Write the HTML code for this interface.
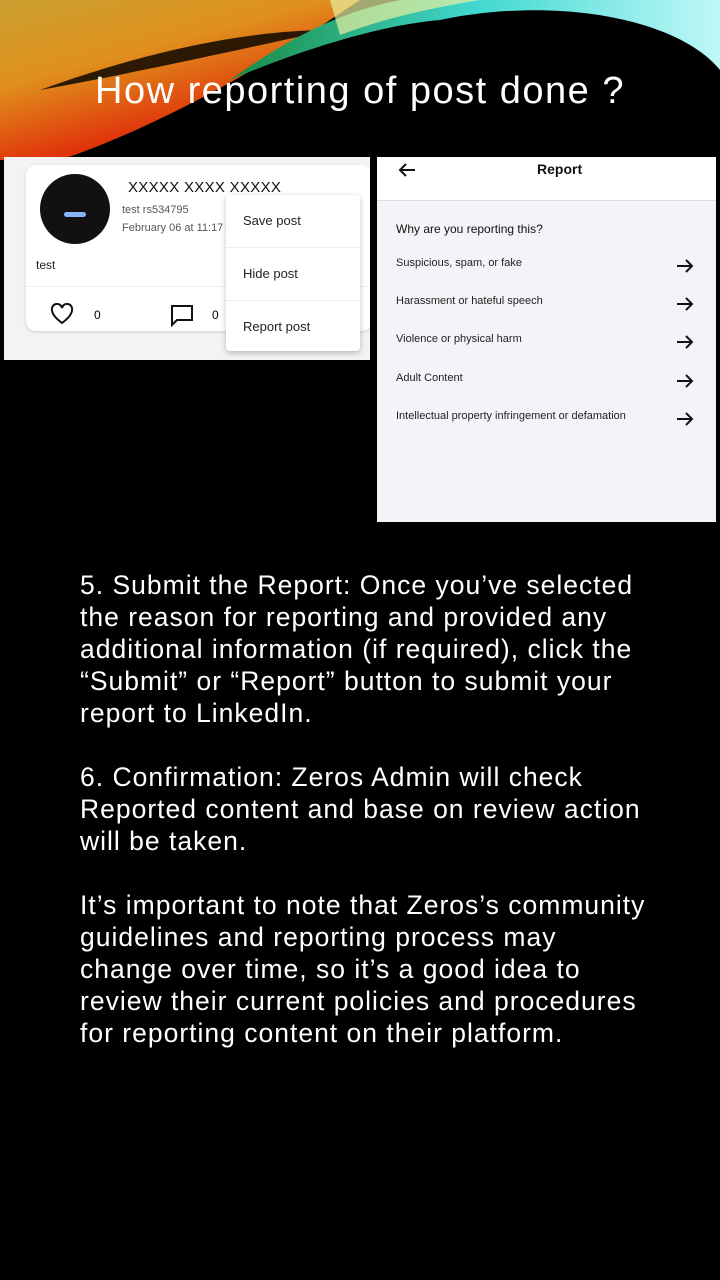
<!DOCTYPE html>
<html><head><meta charset="utf-8"><style>
body{margin:0;width:720px;height:1280px;background:#000;position:relative;overflow:hidden;font-family:"Liberation Sans",sans-serif}
.abs{position:absolute}
h1{position:absolute;left:0;width:720px;top:70px;margin:0;text-align:center;color:#fff;font-weight:normal;font-size:38px;letter-spacing:1.5px}
.lp{left:4px;top:157px;width:366px;height:203px;background:#f3f3f6;overflow:hidden}
.card{left:22px;top:8px;width:346px;height:166px;background:#fff;border-radius:10px;box-shadow:0 1px 3px rgba(0,0,0,.15)}
.menu{left:222px;top:38px;width:134px;height:156px;background:#fff;border-radius:4px;box-shadow:0 2px 6px rgba(0,0,0,.25);font-size:13px;color:#222}
.menu div{height:52px;line-height:52px;padding-left:17px;border-bottom:1px solid #eee}
.rp{left:377px;top:157px;width:339px;height:365px;background:#f4f4f8}
.rh{left:0;top:0;width:339px;height:43px;background:#fff;border-bottom:1px solid #ddd}
.ri{left:19px;font-size:11px;color:#222;width:310px}
.ri svg{position:absolute;left:280px;top:1px}
.txt{left:80px;top:569px;width:640px;color:#fff;font-size:26.5px;line-height:32px;white-space:nowrap;letter-spacing:1px}
</style></head><body>
<svg class="abs" style="left:0;top:0" width="720" height="160">
<defs>
<linearGradient id="g1" x1="0" y1="0" x2="0.6" y2="1"><stop offset="0" stop-color="#c9a030"/><stop offset="0.4" stop-color="#e0901c"/><stop offset="0.8" stop-color="#e0300a"/><stop offset="1" stop-color="#a00000"/></linearGradient>
<linearGradient id="g2" x1="0" y1="0" x2="1" y2="0"><stop offset="0" stop-color="#1a8a40"/><stop offset="0.5" stop-color="#40d8d0"/><stop offset="1" stop-color="#c0f8f8"/></linearGradient>
</defs>
<path d="M0 0 H360 L330 20 C260 70 150 130 60 160 H0Z" fill="url(#g1)"/>
<path d="M40 90 C150 50 250 30 330 30 C260 45 150 70 40 90Z" fill="#000" opacity=".8"/>
<path d="M230 80 C300 30 350 10 400 0 H720 V70 C680 20 560 -5 440 20 C380 25 300 50 230 80Z" fill="url(#g2)"/>
<path d="M330 0 H480 C420 10 380 20 340 35Z" fill="#e8f0a0" opacity=".7"/>
</svg>
<h1>How reporting of post done ?</h1>
<div class="abs lp">
 <div class="abs card">
  <div class="abs" style="left:14px;top:9px;width:70px;height:70px;border-radius:50%;background:#111"><div class="abs" style="left:24px;top:38px;width:22px;height:5px;border-radius:3px;background:#8ab4f8"></div></div>
  <div class="abs" style="left:102px;top:14px;font-size:15px;color:#111;letter-spacing:0.3px">XXXXX XXXX XXXXX</div>
  <div class="abs" style="left:96px;top:39px;font-size:11px;color:#555">test rs534795</div>
  <div class="abs" style="left:96px;top:57px;font-size:11px;color:#555">February 06 at 11:17 A</div>
  <div class="abs" style="left:10px;top:93px;font-size:12px;color:#222">test</div>
  <div class="abs" style="left:0;top:121px;width:346px;border-top:1px solid #eee"></div>
  <svg class="abs" style="left:24px;top:138px" width="24" height="22" viewBox="0 0 24 22"><path d="M12 20 C4 14 2 10 2 7 A5 5 0 0 1 12 5 A5 5 0 0 1 22 7 C22 10 20 14 12 20Z" fill="none" stroke="#111" stroke-width="2"/></svg>
  <div class="abs" style="left:68px;top:143px;font-size:12px">0</div>
  <svg class="abs" style="left:144px;top:139px" width="24" height="24"><path d="M2 2 H22 V16 H7 L2 21Z" fill="none" stroke="#111" stroke-width="2"/></svg>
  <div class="abs" style="left:186px;top:143px;font-size:12px">0</div>
 </div>
 <div class="abs menu"><div>Save post</div><div>Hide post</div><div style="border:none">Report post</div></div>
</div>
<div class="abs rp">
 <div class="abs rh"><svg class="abs" style="left:21px;top:5px" width="18" height="16"><path d="M17 8H2M8 2L2 8L8 14" fill="none" stroke="#111" stroke-width="2"/></svg><div class="abs" style="left:160px;top:4px;font-size:14px;font-weight:bold;color:#111">Report</div></div>
 <div class="abs" style="left:19px;top:65px;font-size:12px;color:#111">Why are you reporting this?</div>
 <div class="abs ri" style="top:100px">Suspicious, spam, or fake<svg width="18" height="16"><path d="M1 8H16M10 2L16 8L10 14" fill="none" stroke="#111" stroke-width="2"/></svg></div>
 <div class="abs ri" style="top:138px">Harassment or hateful speech<svg width="18" height="16"><path d="M1 8H16M10 2L16 8L10 14" fill="none" stroke="#111" stroke-width="2"/></svg></div>
 <div class="abs ri" style="top:176px">Violence or physical harm<svg width="18" height="16"><path d="M1 8H16M10 2L16 8L10 14" fill="none" stroke="#111" stroke-width="2"/></svg></div>
 <div class="abs ri" style="top:215px">Adult Content<svg width="18" height="16"><path d="M1 8H16M10 2L16 8L10 14" fill="none" stroke="#111" stroke-width="2"/></svg></div>
 <div class="abs ri" style="top:253px">Intellectual property infringement or defamation<svg width="18" height="16"><path d="M1 8H16M10 2L16 8L10 14" fill="none" stroke="#111" stroke-width="2"/></svg></div>
</div>
<div class="abs txt">5. Submit the Report: Once you’ve selected<br>the reason for reporting and provided any<br>additional information (if required), click the<br>“Submit” or “Report” button to submit your<br>report to LinkedIn.<br><br>6. Confirmation: Zeros Admin will check<br>Reported content and base on review action<br>will be taken.<br><br>It’s important to note that Zeros’s community<br>guidelines and reporting process may<br>change over time, so it’s a good idea to<br>review their current policies and procedures<br>for reporting content on their platform.</div>
</body></html>
